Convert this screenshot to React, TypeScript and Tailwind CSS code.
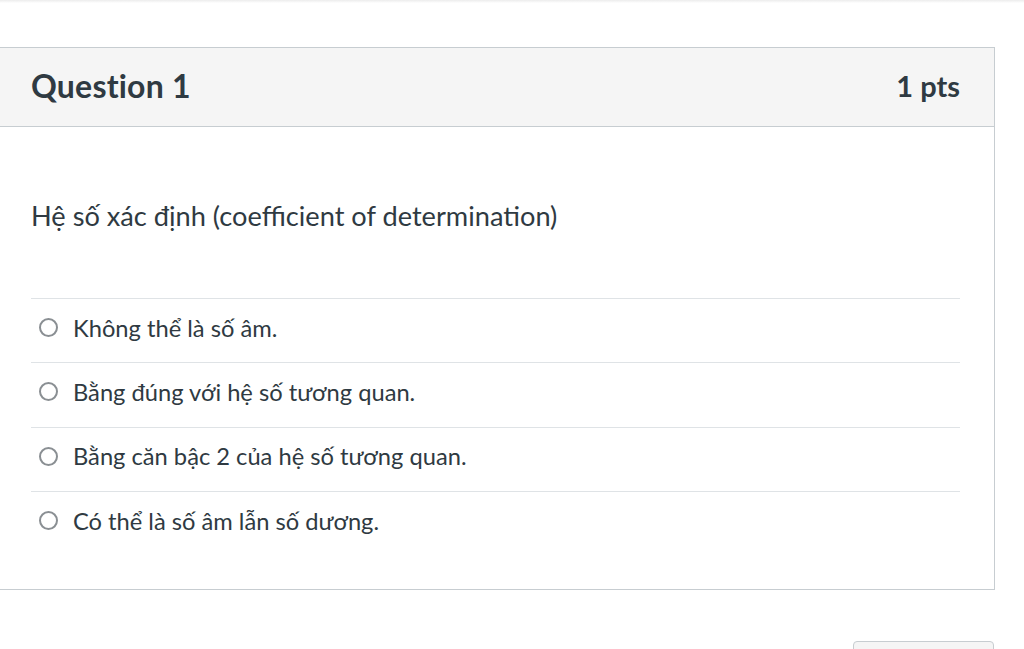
const answers = [
  "Không thể là số âm.",
  "Bằng đúng với hệ số tương quan.",
  "Bằng căn bậc 2 của hệ số tương quan.",
  "Có thể là số âm lẫn số dương.",
];

const Radio = () => (
  <span className="inline-block w-[19px] h-[19px] rounded-full border-2 border-[#8a8f93] bg-white shrink-0" />
);

export default function App() {
  return (
    <div
      className="w-[1024px] h-[649px] overflow-hidden bg-white text-[#2f3a42]"
      style={{ fontFamily: "Lato, 'Noto Sans', sans-serif" }}
    >
      <div className="h-[3px] bg-gradient-to-b from-[#ececec] to-white" />
      <div className="pt-[44px]">
        <div className="w-[995px] border border-l-0 border-[#c7cdd1]">
          <div className="h-[79px] bg-[#f5f5f5] border-b border-[#c7cdd1] flex items-center justify-between pl-[31px] pr-[34px] pb-[2px]">
            <h2 className="text-[32px] font-bold tracking-[0.2px]">Question 1</h2>
            <span className="text-[29px] font-bold">1 pts</span>
          </div>
          <div className="pl-[31px] pr-[34px] pt-[73px] pb-[34px]">
            <p className="text-[27.2px] leading-[32px] mb-[66px]">
              Hệ số xác định (coefficient of determination)
            </p>
            <div>
              {answers.map((a, i) => (
                <div
                  key={i}
                  className="h-[64.33px] border-t border-[#dfe3e6] flex items-center gap-[15px] pl-[8px] pb-[6px]"
                >
                  <Radio />
                  <span className="text-[23.7px] leading-[28px]">{a}</span>
                </div>
              ))}
            </div>
          </div>
        </div>
        <div className="mt-[51px] ml-[853px] w-[141px] h-[40px] rounded-[4px] border border-[#c7cdd1] bg-[#f5f5f5]" />
      </div>
    </div>
  );
}
